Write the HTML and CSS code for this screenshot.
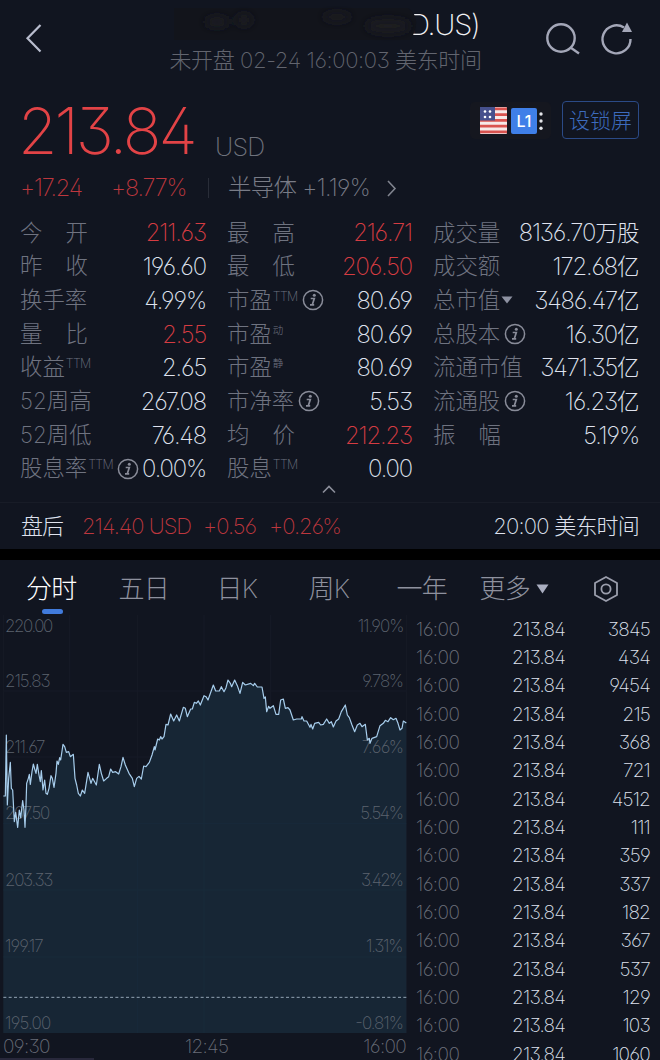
FILE: index.html
```html
<!DOCTYPE html>
<html lang="zh-CN">
<head>
<meta charset="utf-8">
<title>行情</title>
<link rel="stylesheet" href="styles.css">
</head>
<body>
<svg width="0" height="0" class="defs"><symbol id="info" viewBox="0 0 22 22"><circle cx="11" cy="11" r="9.6" fill="none" stroke="currentColor" stroke-width="1.5"/><circle cx="12.3" cy="6.3" r="1.5" fill="currentColor"/><path d="M8.7 9.5H12.3L10.3 15.8H12.2M8 15.8H10.3" fill="none" stroke="currentColor" stroke-width="1.7"/></symbol></svg>
<header class="top">
  <svg class="back" width="24" height="34" viewBox="0 0 24 34"><path d="M19.500 4 6.500 17.300 19.500 30.500" fill="none" stroke="#b9bdce" stroke-width="2.200"/></svg>
  <div class="titles">
    <div class="title"><span>D.US)</span>
      <svg class="smudge" width="246" height="36" viewBox="0 0 246 36"><defs><filter id="b" x="-20%" y="-50%" width="140%" height="200%"><feGaussianBlur stdDeviation="4"/></filter></defs><path d="M2 2H236Q245 8 244 18T238 34H2Z" fill="#12141b"/><g filter="url(#b)" fill="#1a1b20"><ellipse cx="45" cy="16" rx="12" ry="5"/><ellipse cx="72" cy="14" rx="8" ry="6"/><ellipse cx="165" cy="11" rx="14" ry="4"/><ellipse cx="216" cy="20" rx="22" ry="7"/></g></svg>
    </div>
    <div class="sub">未开盘 02-24 16:00:03 美东时间</div>
  </div>
  <svg class="acts" width="96" height="40" viewBox="0 0 96 40" fill="none" stroke="#a4a7b8" stroke-width="2.400"><circle cx="19" cy="19" r="13.700"/><path d="M28.500 28.500 37 34.500"/><path d="M82 8.500A14 14 0 1 0 88.500 20"/><path d="M85 3.500 80 13H90Z" fill="#a4a7b8" stroke="none"/></svg>
</header>

<section class="quote">
  <div class="price-row">
    <span class="price">213.84</span><span class="cur">USD</span>
    <div class="chips">
      <div class="market">
        <svg width="27" height="27" viewBox="0 0 27 27"><rect width="27" height="27" rx="1" fill="#f6e9e8"/><path d="M0 1.900H27M0 7.600H27M0 13.400H27M0 19.100H27M0 24.900H27" stroke="#d9534f" stroke-width="2.900"/><rect width="15" height="13.500" fill="#46508c"/><g fill="#fff"><circle cx="5" cy="4.500" r="1.300"/><circle cx="10" cy="4.500" r="1.300"/><circle cx="5" cy="10" r="1.300"/><circle cx="10" cy="10" r="1.300"/></g></svg>
        <span class="l1">L1</span>
        <svg class="dots" width="4" height="20" viewBox="0 0 4 20" fill="#e4e5ea"><circle cx="2" cy="3" r="1.700"/><circle cx="2" cy="10" r="1.700"/><circle cx="2" cy="17.300" r="1.700"/></svg>
      </div>
      <button class="lock">设锁屏</button>
    </div>
  </div>
  <div class="change"><span class="red c1">+17.24</span><span class="red c2">+8.77%</span><i></i><span class="sector">半导体 +1.19%</span><svg width="12" height="20" viewBox="0 0 12 20"><path d="M2 3 9 10.500 2 18" fill="none" stroke="#81848f" stroke-width="1.600"/></svg></div>
</section>

<section class="stats">
  <div class="col">
    <div class="row"><span class="k two"><b>今</b><b>开</b></span><span class="v red">211.63</span></div>
    <div class="row"><span class="k two"><b>昨</b><b>收</b></span><span class="v">196.60</span></div>
    <div class="row"><span class="k">换手率</span><span class="v">4.99%</span></div>
    <div class="row"><span class="k two"><b>量</b><b>比</b></span><span class="v red">2.55</span></div>
    <div class="row"><span class="k">收益<sup>TTM</sup></span><span class="v">2.65</span></div>
    <div class="row"><span class="k">52周高</span><span class="v">267.08</span></div>
    <div class="row"><span class="k">52周低</span><span class="v">76.48</span></div>
    <div class="row"><span class="k">股息率<sup>TTM</sup><svg class="info"><use href="#info"/></svg></span><span class="v">0.00%</span></div>
  </div>
  <div class="col">
    <div class="row"><span class="k two"><b>最</b><b>高</b></span><span class="v red">216.71</span></div>
    <div class="row"><span class="k two"><b>最</b><b>低</b></span><span class="v red">206.50</span></div>
    <div class="row"><span class="k">市盈<sup>TTM</sup><svg class="info"><use href="#info"/></svg></span><span class="v">80.69</span></div>
    <div class="row"><span class="k">市盈<sup class="cn">动</sup></span><span class="v">80.69</span></div>
    <div class="row"><span class="k">市盈<sup class="cn">静</sup></span><span class="v">80.69</span></div>
    <div class="row"><span class="k">市净率<svg class="info"><use href="#info"/></svg></span><span class="v">5.53</span></div>
    <div class="row"><span class="k two"><b>均</b><b>价</b></span><span class="v red">212.23</span></div>
    <div class="row"><span class="k">股息<sup>TTM</sup></span><span class="v">0.00</span></div>
  </div>
  <div class="col">
    <div class="row"><span class="k">成交量</span><span class="v">8136.70<em>万股</em></span></div>
    <div class="row"><span class="k">成交额</span><span class="v">172.68<em>亿</em></span></div>
    <div class="row"><span class="k">总市值<svg class="caret" width="12" height="8" viewBox="0 0 12 8"><path d="M.5.5H11.500L6 7.500Z" fill="#8e92a2"/></svg></span><span class="v">3486.47<em>亿</em></span></div>
    <div class="row"><span class="k">总股本<svg class="info"><use href="#info"/></svg></span><span class="v">16.30<em>亿</em></span></div>
    <div class="row"><span class="k">流通市值</span><span class="v">3471.35<em>亿</em></span></div>
    <div class="row"><span class="k">流通股<svg class="info"><use href="#info"/></svg></span><span class="v">16.23<em>亿</em></span></div>
    <div class="row"><span class="k two"><b>振</b><b>幅</b></span><span class="v">5.19%</span></div>
  </div>
</section>
<div class="fold"><svg width="16" height="10" viewBox="0 0 16 10"><path d="M2 8.500 8 2.500 14 8.500" fill="none" stroke="#8b8e9a" stroke-width="1.600"/></svg></div>
<section class="after"><span class="name">盘后</span><span class="red p">214.40 USD</span><span class="red q">+0.56</span><span class="red">+0.26%</span><span class="time">20:00 美东时间</span></section>

<nav class="tabs">
  <span class="on">分时</span><span class="t5">五日</span><span class="tk">日K</span><span class="tw">周K</span><span class="ty">一年</span><span class="more">更多<svg width="13" height="10" viewBox="0 0 12 10"><path d="M0 .5H12L6 9.500Z" fill="#aaaec0"/></svg></span>
  <svg class="hex" width="26" height="28" viewBox="0 0 26 28" fill="none" stroke="#9b9eac" stroke-width="1.800"><path d="M13 2 24 8V20L13 26 2 20V8Z" stroke-linejoin="round"/><circle cx="13" cy="14" r="4.600"/></svg>
</nav>
<main class="market-body">
  <div class="chart">
    <svg width="410" height="418" viewBox="0 150 1230 1254">
      <path d="M10 150V1404M209 150V1404M412 150V1404M612 150V1404M812 150V1404M1219 150V1404M10 378H1219M10 576H1219M10 775H1219M10 975H1219M10 1176H1219" stroke="#171b26" stroke-width="3" fill="none"/>
      <path class="area" d="M10 1404V693L16 693 19 510 22 720 26 640 31 592 34 670 38 675 43 770 47 742 53 787 58 735 62 758 68 707 72 735 75 787 78 720 80 655 85 640 88 628 91 658 96 620 100 597 104 612 108 625 112 598 117 630 121 650 124 617 129 675 134 645 138 685 142 688 147 670 153 632 157 640 162 667 168 625 171 588 175 598 179 578 182 585 189 538 194 545 199 562 206 560 211 575 220 568 225 640 230 660 235 685 241 693 247 675 254 685 264 622 273 655 278 640 289 660 298 598 304 625 311 648 320 640 326 635 332 612 338 622 347 620 356 627 363 605 369 577 376 600 387 625 397 640 403 665 410 640 417 634 424 642 431 603 438 605 448 592 456 570 463 545 465 555 473 522 478 525 482 515 486 522 492 515 498 478 504 480 512 447 521 468 530 450 538 468 550 427 556 430 562 455 572 432 577 432 583 412 589 415 595 408 601 420 612 392 618 395 624 405 640 360 647 378 658 378 664 365 672 380 678 368 684 345 691 355 695 365 704 345 712 362 720 385 728 352 736 360 752 355 760 362 764 355 772 366 786 366 792 400 796 396 800 440 806 424 810 430 820 422 828 448 836 448 842 405 850 402 856 430 864 428 870 435 880 465 890 462 904 462 906 455 912 468 920 468 930 487 933 478 938 492 944 475 956 472 962 480 970 478 980 462 988 475 994 470 1000 486 1008 468 1016 462 1024 440 1036 420 1042 450 1048 458 1056 480 1064 500 1072 480 1080 475 1086 485 1096 478 1102 525 1108 520 1110 535 1116 520 1130 515 1140 482 1150 475 1156 466 1164 470 1172 458 1180 464 1188 460 1194 475 1200 495 1206 490 1210 468 1219 474V1404Z"/>
      <path d="M10 775H1219M10 975H1219M10 1176H1219M412 660V1404M612 400V1404" stroke="#192a3a" stroke-width="3" fill="none"/>
      <g class="axis">
        <text x="15" y="202" textLength="145">220.00</text><text x="15" y="366" textLength="137">215.83</text><text x="15" y="564" textLength="121">211.67</text><text x="15" y="763" textLength="136">207.50</text><text x="15" y="962" textLength="145">203.33</text><text x="15" y="1161" textLength="116">199.17</text><text x="15" y="1392" textLength="139">195.00</text>
        <text x="1073" y="202" textLength="140">11.90%</text><text x="1087" y="366" textLength="125">9.78%</text><text x="1085" y="564" textLength="127">7.66%</text><text x="1081" y="763" textLength="131">5.54%</text><text x="1083" y="962" textLength="129">3.42%</text><text x="1098" y="1161" textLength="112">1.31%</text><text x="1066" y="1392" textLength="146">-0.81%</text>
      </g>
      <path class="line" d="M10 693L16 693 19 510 22 720 26 640 31 592 34 670 38 675 43 770 47 742 53 787 58 735 62 758 68 707 72 735 75 787 78 720 80 655 85 640 88 628 91 658 96 620 100 597 104 612 108 625 112 598 117 630 121 650 124 617 129 675 134 645 138 685 142 688 147 670 153 632 157 640 162 667 168 625 171 588 175 598 179 578 182 585 189 538 194 545 199 562 206 560 211 575 220 568 225 640 230 660 235 685 241 693 247 675 254 685 264 622 273 655 278 640 289 660 298 598 304 625 311 648 320 640 326 635 332 612 338 622 347 620 356 627 363 605 369 577 376 600 387 625 397 640 403 665 410 640 417 634 424 642 431 603 438 605 448 592 456 570 463 545 465 555 473 522 478 525 482 515 486 522 492 515 498 478 504 480 512 447 521 468 530 450 538 468 550 427 556 430 562 455 572 432 577 432 583 412 589 415 595 408 601 420 612 392 618 395 624 405 640 360 647 378 658 378 664 365 672 380 678 368 684 345 691 355 695 365 704 345 712 362 720 385 728 352 736 360 752 355 760 362 764 355 772 366 786 366 792 400 796 396 800 440 806 424 810 430 820 422 828 448 836 448 842 405 850 402 856 430 864 428 870 435 880 465 890 462 904 462 906 455 912 468 920 468 930 487 933 478 938 492 944 475 956 472 962 480 970 478 980 462 988 475 994 470 1000 486 1008 468 1016 462 1024 440 1036 420 1042 450 1048 458 1056 480 1064 500 1072 480 1080 475 1086 485 1096 478 1102 525 1108 520 1110 535 1116 520 1130 515 1140 482 1150 475 1156 466 1164 470 1172 458 1180 464 1188 460 1194 475 1200 495 1206 490 1210 468 1219 474"/>
      <path d="M10 1297H1219" stroke="#93a4b4" stroke-width="3" stroke-dasharray="9 7"/>
    </svg>
    <div class="hours"><span>09:30</span><span>12:45</span><span>16:00</span></div>
    <div class="vol"></div>
  </div>
  <div class="ticks">
    <div><span>16:00</span><span>213.84</span><span>3845</span></div>
    <div><span>16:00</span><span>213.84</span><span>434</span></div>
    <div><span>16:00</span><span>213.84</span><span>9454</span></div>
    <div><span>16:00</span><span>213.84</span><span>215</span></div>
    <div><span>16:00</span><span>213.84</span><span>368</span></div>
    <div><span>16:00</span><span>213.84</span><span>721</span></div>
    <div><span>16:00</span><span>213.84</span><span>4512</span></div>
    <div><span>16:00</span><span>213.84</span><span>111</span></div>
    <div><span>16:00</span><span>213.84</span><span>359</span></div>
    <div><span>16:00</span><span>213.84</span><span>337</span></div>
    <div><span>16:00</span><span>213.84</span><span>182</span></div>
    <div><span>16:00</span><span>213.84</span><span>367</span></div>
    <div><span>16:00</span><span>213.84</span><span>537</span></div>
    <div><span>16:00</span><span>213.84</span><span>129</span></div>
    <div><span>16:00</span><span>213.84</span><span>103</span></div>
    <div><span>16:00</span><span>213.84</span><span>1060</span></div>
  </div>
</main>
</body>
</html>
```
FILE: styles.css
```css
* { box-sizing: border-box; }
html { background: #111520; }
body {
  margin: 0; width: 660px; height: 1060px; overflow: hidden;
  background: #111520; color: #dfe2ee;
  font-family: Inter, "Noto Sans CJK SC", sans-serif;
  font-weight: 200; font-feature-settings: "cv09", "ss01";
  line-height: 1; white-space: nowrap;
}
.defs { display: block; }
.red { color: #d53c42; }

.top { display: flex; height: 88px; padding: 0 22px 0 21px; justify-content: space-between; }
.back { margin-top: 21px; }
.titles { display: flex; flex-direction: column; align-items: center; margin-left: 64px; width: 330px; }
.title { position: relative; width: 308px; height: 44px; padding-top: 9px; text-align: right; font-size: 29px; line-height: 32px; letter-spacing: -1.2px; color: #f1f2f6; }
.smudge { position: absolute; left: 0; top: 6px; }
.sub { font-size: 22px; line-height: 33px; letter-spacing: -0.4px; color: #62656f; }
.acts { margin-top: 19px; }

.quote { height: 127px; padding: 0 21px; }
.price-row { display: flex; height: 82px; }
.price { width: 197px; margin-left: -3px; font-size: 64px; line-height: 86px; letter-spacing: -3px; color: #e24346; }
.cur { font-size: 25px; line-height: 119px; letter-spacing: -0.8px; color: #6f727c; }
.chips { margin-left: auto; display: flex; gap: 11px; padding-top: 13px; height: 52px; }
.market { display: flex; align-items: center; width: 81px; height: 37px; margin-top: 1px; padding-left: 10px; gap: 4px; background: #15171f; border-radius: 5px; }
.l1 { width: 26px; height: 26px; border-radius: 2px; background: #3f7fe8; color: #fff; font-size: 16px; font-weight: 500; line-height: 26px; text-align: center; }
.dots { margin-left: -2px; }
.lock { width: 77px; height: 38px; padding: 0 0 2px; background: none; border: 1px solid #2b4a86; border-radius: 4px; color: #3d6bbd; font: 200 21px "Noto Sans CJK SC", sans-serif; }
.change { display: flex; align-items: center; height: 36px; margin-left: -1px; font-size: 23.500px; letter-spacing: -1.2px; }
.c1 { width: 91px; }
.c2 { width: 97px; }
.change i { width: 20px; height: 20px; border-left: 1px solid #292d38; }
.change .red, .after .red { color: #bd373e; }
.sector { width: 158px; color: #797c87; letter-spacing: -0.7px; }

.stats { display: grid; grid-template-columns: 185px 184px 205px; column-gap: 22px; padding: 1px 21px 0; height: 271px; }
.row { display: flex; justify-content: space-between; align-items: center; height: 33.700px; }
.k { display: flex; align-items: center; margin-left: -1px; font-size: 22.400px; color: #6f7380; }
.two { width: 68px; justify-content: space-between; }
.two b { font-weight: 200; }
.k sup { align-self: flex-start; font-size: 12.500px; line-height: 15px; letter-spacing: -0.7px; margin-left: 1px; vertical-align: baseline; }
.k .cn { font-size: 10.500px; }
.info { width: 22px; height: 22px; margin-left: 4px; color: #898c99; }
.caret { margin-left: 1px; }
.v { padding-top: 1px; font-size: 23.800px; letter-spacing: -1.15px; }
.v em { font-style: normal; font-size: 22.500px; letter-spacing: -0.6px; }
.fold { height: 16px; padding-left: 321px; }
.fold svg { position: relative; top: -2px; display: block; }
.after { display: flex; align-items: center; height: 47px; padding: 0 21px 1px; border-top: 1px solid #181c27; font-size: 22px; letter-spacing: -0.8px; }
.name { width: 61px; letter-spacing: -1px; }
.p { width: 121px; }
.q { width: 66px; }
.after .red { letter-spacing: -1px; }
.time { margin-left: auto; }

.tabs { display: flex; align-items: center; height: 66px; border-top: 11px solid #000; padding: 2px 0 0 26px; font-size: 26px; color: #8e919e; }
.tabs span { position: relative; letter-spacing: -0.8px; }
.tabs .on { width: 92.500px; color: #fff; font-weight: 300; }
.tabs .on::after { content: ""; position: absolute; left: 16px; top: 33px; width: 21px; height: 5px; border-radius: 3px; background: #417bdc; }
.t5 { width: 98px; }
.tk { width: 92px; }
.tw { width: 88px; }
.ty { width: 83px; }
.tabs .more { width: 113px; }
.more svg { margin-left: 6px; vertical-align: 4px; }

.market-body { display: flex; }
.chart { width: 410px; }
.chart > svg { display: block; }
.area { fill: #172635; }
.line { fill: none; stroke: #a7cdec; stroke-width: 3.600; stroke-linejoin: round; }
.axis { font-size: 51px; font-weight: 200; fill: #5d646f; }
.hours { display: flex; justify-content: space-between; padding: 1px 4px 0 3px; height: 25px; line-height: 25px; font-size: 19px; letter-spacing: -0.7px; color: #696d78; }
.vol { width: 94px; height: 4px; background: #28283b; }
.ticks { flex: 1; padding: 0 10px 0 6px; font-size: 19px; letter-spacing: -0.8px; }
.ticks div { display: grid; grid-template-columns: 70px 79px 1fr; height: 28.330px; align-items: center; text-align: right; }
.ticks span:first-child { color: #6d717c; text-align: left; letter-spacing: -0.6px; }
```
